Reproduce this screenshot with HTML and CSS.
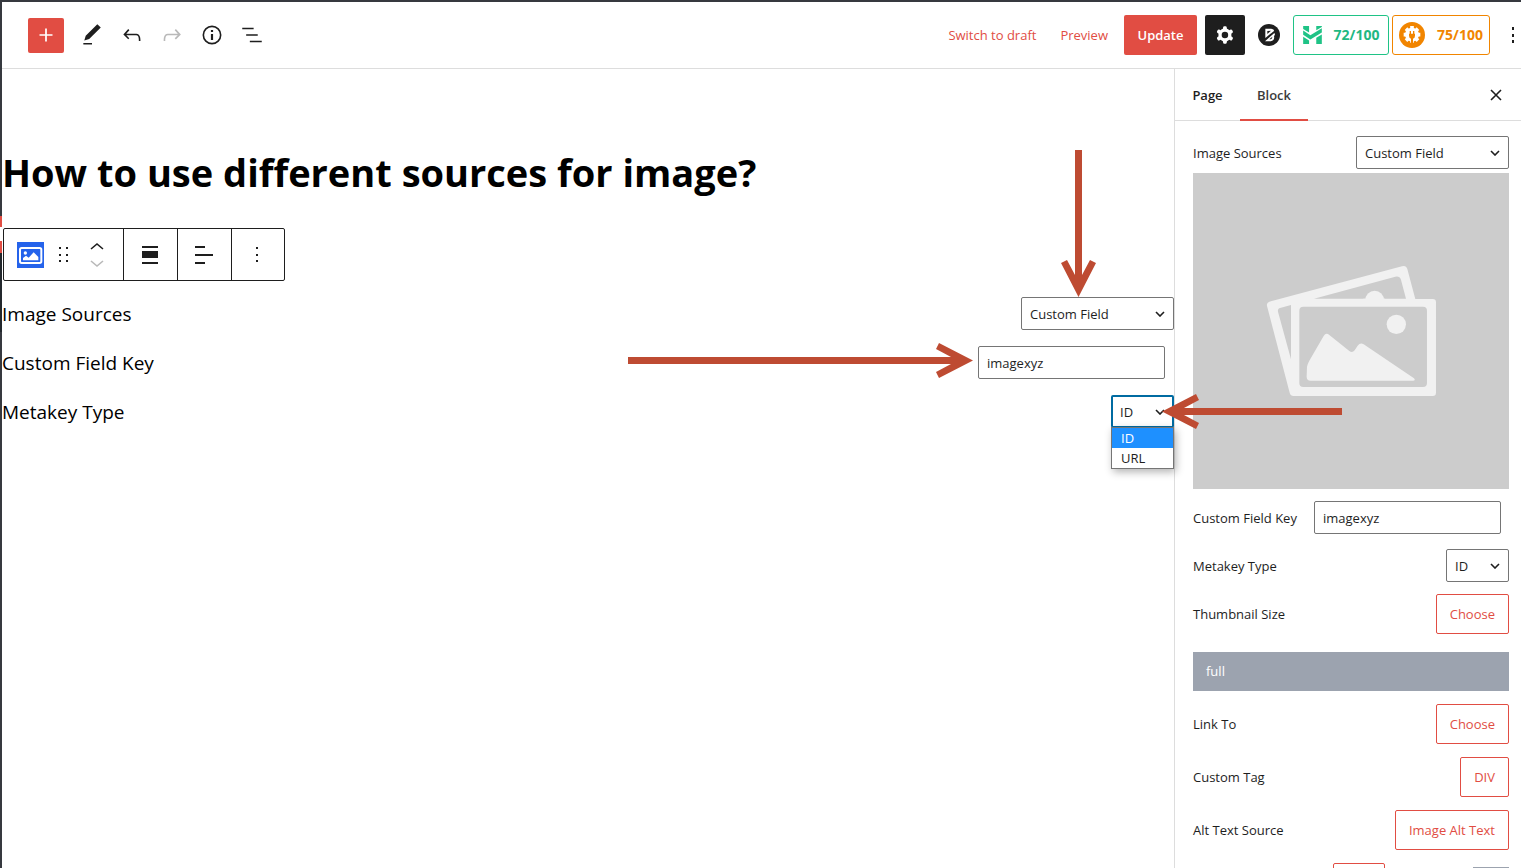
FILE: index.html
```html
<!DOCTYPE html>
<html lang="en">
<head>
<meta charset="utf-8">
<title>Edit Page</title>
<link rel="stylesheet" href="styles.css">
</head>
<body>
<div class="rail"></div>
<div class="editor">
  <header class="topbar">
    <div class="tools">
      <button class="add" aria-label="Add block"><svg class="icon" viewBox="0 0 24 24"><path d="M18 11.2h-5.2V6h-1.6v5.2H6v1.6h5.2V18h1.6v-5.2H18z"/></svg></button>
      <button class="tool" aria-label="Edit"><svg class="icon" viewBox="0 0 24 24"><path d="M20.1 5.1L16.9 2 6.2 12.7l-1.3 4.4 4.5-1.3L20.1 5.1zM4 20.8h8v-1.5H4v1.5z"/></svg></button>
      <button class="tool" aria-label="Undo"><svg class="icon" viewBox="0 0 24 24"><path d="M18.3 11.7c-.6-.6-1.4-.9-2.3-.9H6.7l2.9-3.3-1.1-1-4.5 5L8.5 16l1-1-2.7-2.7H16c.5 0 .9.2 1.3.5 1 1 1 3.4 1 4.5v.3h1.5v-.2c0-1.5 0-4.3-1.5-5.7z"/></svg></button>
      <button class="tool muted" aria-label="Redo"><svg class="icon" viewBox="0 0 24 24"><path d="M15.6 6.5l-1.1 1 2.9 3.3H8c-.9 0-1.7.3-2.3.9-1.4 1.5-1.4 4.2-1.4 5.6v.2h1.5v-.3c0-1.1 0-3.5 1-4.5.3-.3.7-.5 1.3-.5h9.2L14.5 15l1.1 1.1 4.6-4.6-4.6-5z"/></svg></button>
      <button class="tool" aria-label="Details"><svg class="icon" viewBox="0 0 24 24"><circle cx="12" cy="12" r="8" fill="none" stroke="currentColor" stroke-width="1.5"/><path d="M11 11h2v5.500h-2zM11 7.300h2v2h-2z"/></svg></button>
      <button class="tool" aria-label="List view"><svg class="icon" viewBox="0 0 24 24"><path d="M3 5.200h10.500v1.500H3zM6.600 11.200h10.700v1.500H6.600zM10 17.200h11v1.500H10z"/></svg></button>
    </div>
    <div class="actions">
      <a class="link" href="#">Switch to draft</a>
      <a class="link" href="#">Preview</a>
      <button class="update">Update</button>
      <button class="gear" aria-label="Settings"><svg class="icon" viewBox="0 0 24 24"><path fill-rule="evenodd" d="M10.289 4.836A1 1 0 0111.275 4h1.306a1 1 0 01.987.836l.244 1.466c.787.26 1.503.679 2.108 1.218l1.393-.522a1 1 0 011.216.437l.653 1.130a1 1 0 01-.23 1.273l-1.148.944a6.025 6.025 0 010 2.435l1.149.946a1 1 0 01.23 1.272l-.653 1.130a1 1 0 01-1.216.437l-1.394-.522c-.605.54-1.320.958-2.108 1.218l-.244 1.466a1 1 0 01-.987.836h-1.306a1 1 0 01-.986-.836l-.244-1.466a5.995 5.995 0 01-2.108-1.218l-1.394.522a1 1 0 01-1.217-.436l-.653-1.131a1 1 0 01.23-1.272l1.149-.946a6.026 6.026 0 010-2.435l-1.148-.944a1 1 0 01-.23-1.272l.653-1.131a1 1 0 011.217-.437l1.393.522a5.994 5.994 0 012.108-1.218l.244-1.466zM14.929 12a3 3 0 11-6 0 3 3 0 016 0z"/></svg></button>
      <button class="brand" aria-label="Block library"><svg width="22" height="22" viewBox="0 0 66 66"><circle cx="33" cy="33" r="33" fill="#1e1e1e"/><path d="M22 14h18q9 1 8 7L22 42z" fill="#fff"/><path d="M21 52l28-25q4 5-1 9 3 14-10 16z" fill="#fff"/><path d="M28 30v-9l11-1zM34 46l9-8q0 7-5 8z" fill="#1e1e1e"/></svg></button>
      <button class="score green"><svg width="19" height="18" viewBox="0 0 57 55"><path d="M0 0h18v20L0 9zM40 0h17v3L40 13zM0 14l22 14L57 7v13L22 41 0 27zM0 33l18 11v11H0zM40 36l17-10v29H40z" fill="#1fc386"/></svg>72/100</button>
      <button class="score orange"><svg width="26" height="26" viewBox="0 0 78 78"><circle cx="39" cy="39" r="39" fill="#f18500"/><circle cx="39" cy="38" r="21" fill="#fff"/><g stroke="#fff" stroke-width="11"><path d="M39 12v50M14 38h50M21 20l36 36M57 20L21 56"/></g><path d="M30 35h18v6q0 7-6 9v22h-6V50q-6-2-6-9zM32 27h4v9h-4zM42 27h4v9h-4z" fill="#f18500"/></svg>75/100</button>
      <button class="more" aria-label="Options"><svg width="16" height="24" viewBox="0 0 16 24"><path d="M7 4h2v3H7zM7 11h2v3H7zM7 17h2v3H7z"/></svg></button>
    </div>
  </header>
  <div class="body">
    <main class="canvas">
      <h1 class="title">How to use different sources for image?</h1>
      <div class="blockbar">
        <div class="group lead">
          <button class="type" aria-label="Image block"><svg width="27" height="26" viewBox="0 0 81 78"><path fill="#2563eb" d="M0 0h81v78H0z"/><rect x="9" y="18" width="64" height="45" rx="5" fill="none" stroke="#fff" stroke-width="6"/><path d="M18 55v-7l9-7 8 6 15-16 14 14v10z" fill="#fff"/><circle cx="25" cy="33" r="5" fill="#fff"/></svg></button>
          <button class="drag" aria-label="Drag"><svg width="12" height="18" viewBox="0 0 12 18"><path d="M1 1h2v2H1zM8 1h2v2H8zM1 8h2v2H1zM8 8h2v2H8zM1 14h2v2H1zM8 14h2v2H8z"/></svg></button>
          <div class="movers">
            <button aria-label="Move up"><svg width="14" height="8" viewBox="0 0 14 8"><path class="stroke" d="M1 7l6-5 6 5"/></svg></button>
            <button class="muted" aria-label="Move down"><svg width="14" height="8" viewBox="0 0 14 8"><path class="stroke" d="M1 1l6 5 6-5"/></svg></button>
          </div>
        </div>
        <button class="group" aria-label="Align"><svg width="18" height="18" viewBox="0 0 18 18"><path d="M1 0h16v2H1zM1 5h16v7H1zM1 16h16v2H1z"/></svg></button>
        <button class="group" aria-label="Text align"><svg width="18" height="18" viewBox="0 0 18 18"><path d="M0 0h10v2H0zM0 8h18v2H0zM0 16h10v2H0z"/></svg></button>
        <button class="group" aria-label="Block options"><svg width="4" height="18" viewBox="0 0 4 18"><path d="M1 1h2v2H1zM1 8h2v2H1zM1 14h2v2H1z"/></svg></button>
      </div>
      <div class="fields">
        <div class="field">
          <label for="src">Image Sources</label>
          <div class="pick wide"><select id="src"><option>Custom Field</option></select><svg class="chev" viewBox="0 0 10 6"><path class="stroke" d="M1 1l4 4 4-4"/></svg>
            <svg class="arrow down" width="37" height="147" viewBox="0 0 37 147"><path d="M15 0h7v125l8-15 6 3-17.500 34L1 113l6-3 8 15z"/></svg></div>
        </div>
        <div class="field">
          <label for="key">Custom Field Key</label>
          <div class="entry"><input id="key" type="text" value="imagexyz">
            <svg class="arrow right" width="345" height="37" viewBox="0 0 345 37"><path d="M0 15v7h323l-15 8 3 6 34-17.500L311 1l-3 6 15 8z"/></svg></div>
        </div>
        <div class="field">
          <label for="meta">Metakey Type</label>
          <div class="pick small open"><select id="meta"><option>ID</option><option>URL</option></select><svg class="chev" viewBox="0 0 10 6"><path class="stroke" d="M1 1l4 4 4-4"/></svg>
            <ul class="menu" role="listbox"><li class="on" role="option">ID</li><li role="option">URL</li></ul>
            <svg class="arrow left" width="180" height="37" viewBox="0 0 180 37"><path d="M180 15v7H22l15 8-3 6L0 18.500 34 1l3 6-15 8z"/></svg></div>
        </div>
      </div>
    </main>
    <aside class="side">
      <nav class="tabs">
        <button class="tab">Page</button>
        <button class="tab active">Block</button>
        <button class="close" aria-label="Close"><svg width="12" height="12" viewBox="0 0 12 12"><path class="stroke" d="M1 1l10 10M11 1L1 11"/></svg></button>
      </nav>
      <div class="panel">
        <div class="row top"><label for="s-src">Image Sources</label><div class="pick wide"><select id="s-src"><option>Custom Field</option></select><svg class="chev" viewBox="0 0 10 6"><path class="stroke" d="M1 1l4 4 4-4"/></svg></div></div>
        <svg class="preview" viewBox="0 0 316 316"><path fill="#ccc" d="M0 0h316v316H0z"/><g transform="translate(47 77) scale(.3333)"><path fill="#f1f1f1" d="M88 155L486 49q12-4 16 8l24 90h52q10 0 10 10v271q0 10-10 10H160q-8 0-11-10L81 168q-2-10 7-13z"/><path fill="#ccc" d="M120 174l33-9v163L114 185q-2-8 6-11zM222 146l244-66q13-3 17 9l15 57z"/><circle cx="404" cy="150" r="28" fill="#f1f1f1"/><path fill="#f1f1f1" d="M370 146h65v25h-65z"/><rect x="178" y="170" width="383" height="241" rx="12" fill="#ccc"/><circle cx="469" cy="223" r="29" fill="#f1f1f1"/><path fill="#f1f1f1" d="M201 350q2-9 7-18l43-74q7-11 17-3l60 48q9 7 16-2l9-14q8-10 18-4l151 102q6 7-3 7H212q-12 0-12-12z"/></g></svg>
        <div class="row key"><label for="s-key">Custom Field Key</label><input id="s-key" type="text" value="imagexyz"></div>
        <div class="row meta"><label for="s-meta">Metakey Type</label><div class="pick small"><select id="s-meta"><option>ID</option></select><svg class="chev" viewBox="0 0 10 6"><path class="stroke" d="M1 1l4 4 4-4"/></svg></div></div>
        <div class="row btn"><span>Thumbnail Size</span><button class="choose">Choose</button></div>
        <div class="value">full</div>
        <div class="row btn"><span>Link To</span><button class="choose">Choose</button></div>
        <div class="row btn"><span>Custom Tag</span><button class="choose">DIV</button></div>
        <div class="row btn"><span>Alt Text Source</span><button class="choose">Image Alt Text</button></div>
        <div class="row units"><button class="choose unit" aria-label="Unit"></button><button class="swatch" aria-label="Value"></button></div>
      </div>
    </aside>
  </div>
</div>
</body>
</html>
```

FILE: styles.css
```css
* { box-sizing: border-box; }
body {
  margin: 0;
  height: 100vh;
  display: flex;
  overflow: hidden;
  border-top: 2px solid #36393f;
  background: #fff;
  color: #1e1e1e;
  font: 13px/20px "Open Sans", "Noto Sans", sans-serif;
}
button, input, select { font: inherit; color: inherit; }
button { padding: 0; border: 0; background: none; display: flex; align-items: center; justify-content: center; }
svg { display: block; fill: currentColor; flex: none; }
.stroke { fill: none; stroke: currentColor; stroke-width: 1.6; }
.muted { color: #b9b9b9; }
.rail {
  width: 2px;
  flex: none;
  background: linear-gradient(#36393f 214px, #e14d43 214px 225px, #fff 225px 239px, #e14d43 239px 251px, #23282d 251px 330px, #36393f 330px);
}
.editor { flex: 1; min-width: 0; display: flex; flex-direction: column; }

.topbar {
  flex: none;
  height: 67px;
  display: flex;
  align-items: center;
  justify-content: space-between;
  padding-left: 26px;
  border-bottom: 1px solid #ddd;
}
.tools, .actions { display: flex; align-items: center; }
.icon { width: 26px; height: 26px; }
.add { width: 36px; height: 35px; margin-right: 8px; border-radius: 2px; background: #e14d43; color: #fff; }
.tool { width: 40px; height: 40px; }
.link { color: #e14d43; text-decoration: none; margin-right: 24px; }
.link + .link { margin-right: 16px; }
.update { width: 73px; height: 40px; border-radius: 2px; background: #e14d43; color: #fff; font-weight: 600; }
.gear { width: 40px; height: 40px; margin-left: 8px; border-radius: 2px; background: #1e1e1e; color: #fff; }
.brand { margin: 0 13px; }
.score { height: 40px; border: 1px solid; border-radius: 3px; font-size: 14px; font-weight: 700; }
.green { width: 96px; gap: 12px; color: #1fb883; border-color: #1fc386; margin-right: 3px; }
.orange { width: 98px; gap: 12px; color: #f18500; margin-right: 15px; }
.more { width: 16px; height: 40px; }

.body { flex: 1; min-height: 0; display: flex; }
.canvas { flex: 1; min-width: 0; padding-top: 75px; }
.title { margin: 0 0 28px; font-size: 38px; line-height: 56px; font-weight: 700; color: #000; }
.blockbar {
  width: fit-content;
  height: 53px;
  display: flex;
  margin: 0 0 16px 1px;
  border: 1px solid #1e1e1e;
  border-radius: 2px;
}
.group { width: 54px; padding-right: 2px; }
.group + .group { border-left: 1px solid #1e1e1e; }
.group:last-child { width: 53px; }
.lead { width: 119px; display: flex; align-items: center; padding-left: 13px; }
.drag { margin-left: 14px; }
.movers { display: grid; gap: 10px; margin-left: 20px; }

.fields { display: grid; gap: 16px; }
.field { display: flex; align-items: center; justify-content: space-between; height: 33px; }
.field label { font-size: 19px; line-height: 28px; color: #000; }
.pick { position: relative; }
.pick select {
  width: 100%;
  height: 33px;
  padding: 0 8px;
  appearance: none;
  border: 1px solid #757575;
  border-radius: 2px;
  background: #fff;
}
.wide { width: 153px; }
.small { width: 63px; }
.chev { position: absolute; right: 9px; top: 14px; width: 10px; height: 6px; pointer-events: none; }
input {
  width: 187px;
  height: 33px;
  padding: 0 8px;
  border: 1px solid #757575;
  border-radius: 2px;
  background: #fff;
}
.entry { position: relative; margin-right: 9px; }
.open select { border: 2px solid #006ba1; padding: 0 7px; }
.menu {
  position: absolute;
  top: 32px;
  left: 0;
  right: 0;
  z-index: 2;
  margin: 0;
  padding: 0;
  list-style: none;
  border: 1px solid #757575;
  background: #fff;
  box-shadow: 2px 3px 8px rgba(0, 0, 0, .3);
}
.menu li { padding-left: 9px; }
.menu .on { background: #1e90ff; color: #fff; }
.arrow { position: absolute; z-index: 3; color: #be4b32; pointer-events: none; }
.down { bottom: 100%; right: 77px; }
.right { right: 192px; top: -4px; }
.left { left: 51px; top: -2px; }

.side { flex: none; width: 347px; border-left: 1px solid #ddd; }
.tabs { height: 52px; display: flex; border-bottom: 1px solid #ddd; }
.tab { height: 52px; width: 65px; font-weight: 600; }
.active { width: 68px; padding-top: 2px; border-bottom: 2px solid #e14d43; color: #3c3c3c; }
.close { margin-left: auto; width: 50px; }
.panel { padding: 15px 12px 0 18px; }
.row { display: flex; align-items: center; justify-content: space-between; }
.preview { width: 100%; margin: 4px 0 12px; }
.key { padding-right: 8px; margin-bottom: 15px; }
.meta { margin-bottom: 12px; }
.choose { height: 40px; padding: 0 13px; border: 1px solid #e14d43; border-radius: 2px; color: #e14d43; }
.value { margin: 18px 0 13px; padding: 9px 13px; line-height: 21px; background: #9ca3af; color: #fff; }
.value ~ .btn { margin-bottom: 13px; }
.unit { width: 52px; }
.units { align-items: flex-start; padding-left: 140px; }
.swatch { width: 36px; height: 32px; margin-top: 4px; border: 1px solid #9ca3af; }
```
